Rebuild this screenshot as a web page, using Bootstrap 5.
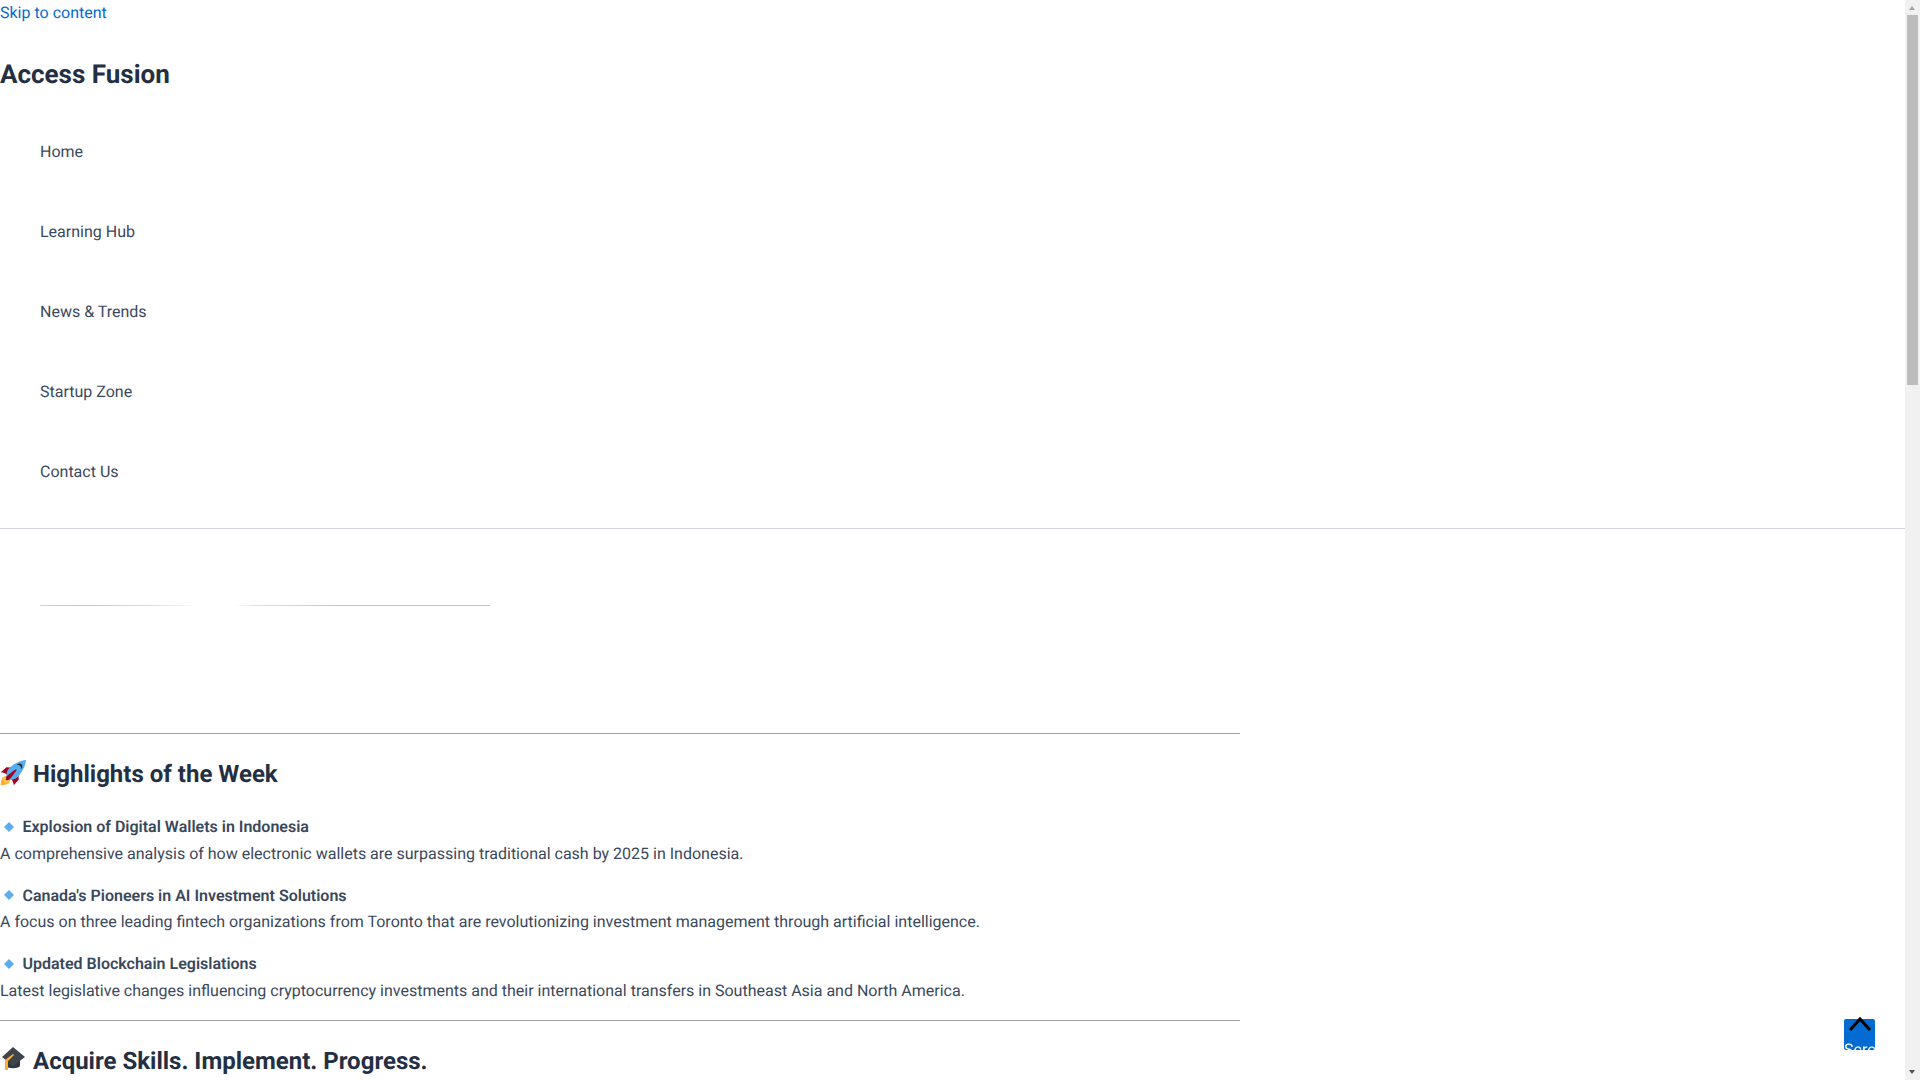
<!DOCTYPE html>
<html lang="en">
<head>
  <meta charset="UTF-8">
  <title>Access Fusion</title>
  <meta name="viewport" content="width=device-width, initial-scale=1">
  <link href="https://cdn.jsdelivr.net/npm/bootstrap@5.3.0/dist/css/bootstrap.min.css" rel="stylesheet">
  <style>
    html { overflow: hidden; }
    body { font-family: Roboto, "Liberation Sans", sans-serif; font-size: 16px; line-height: 1.65; color: #3a485c; background: #fff; margin-right: 15px; text-rendering: geometricPrecision; }
    a.skip-link { color: #046bd2; text-decoration: none; display: block; line-height: 26px; width: fit-content; }
    .site-head { border-bottom: 1px solid #d1d5db; }
    .site-title { font-size: 26px; font-weight: 700; line-height: 1.2; color: #232f43; margin: 0; padding: 34px 0 21px; }
    .menu-list { padding-bottom: 16px; }
    .menu-link { display: block; padding: 0 40px; line-height: 80px; color: #3a485c; text-decoration: none; }
    .hero-lines { padding: 76px 0 0 40px; height: 204px; }
    .hero-line { height: 1px; background: #c4c7cb; }
    .line-one { width: 160px; background: linear-gradient(90deg, #c6d3de 0%, #c4c5c8 30%, #d5dfe7 70%, #fff 100%); }
    .line-two { width: 255px; margin-left: 35px; background: linear-gradient(90deg, #fff 0%, #d8e3ee 8%, #c4c5c8 40%, #c4c5c8 100%); }
    .page-col { width: 1240px; }
    .rule { height: 1px; background: #a3a3a3; }
    .sect-title { font-size: 24px; font-weight: 700; line-height: 1.3; color: #232f43; margin: 0; padding-top: 25px; display: flex; align-items: center; gap: 7px; }
    .sect-title svg { transform: translateY(-2px); }
    .news-list { padding-top: 24px; }
    .news-title { font-size: 16px; font-weight: 600; line-height: 26.400px; color: #3a485c; display: flex; align-items: center; gap: 4.500px; margin: 0; }
    .news-title svg { transform: translateY(-1px); }
    .news-text { line-height: 26.400px; margin: 0; }
    .news-item { margin-bottom: 15.700px; }
    .to-top { position: fixed; left: 1844px; top: 1019px; width: 31px; height: 31px; background: #046bd2; border-radius: 2px; overflow: hidden; color: #fff; font-size: 16px; line-height: 1; white-space: nowrap; }
    .to-top span { display: block; padding-top: 23px; }
    .top-chevron { position: fixed; left: 1848px; top: 1016px; }
    .fake-scroll { position: fixed; top: 0; right: 0; bottom: 0; width: 15px; background: #f1f1f1; }
    .fake-thumb { position: absolute; left: 2px; top: 15px; width: 11px; height: 370px; background: #bcbcbc; }
    .fake-up, .fake-down { position: absolute; left: 4px; width: 0; height: 0; border-left: 3.500px solid transparent; border-right: 3.500px solid transparent; }
    .fake-up { top: 6px; border-bottom: 4px solid #a3a3a3; }
    .fake-down { bottom: 6px; border-top: 4px solid #505050; }
  </style>
</head>
<body>
  <a class="skip-link" href="#main">Skip to content</a>

  <header class="site-head">
    <h1 class="site-title">Access Fusion</h1>
    <nav>
      <ul class="list-unstyled m-0 menu-list">
        <li><a class="menu-link" href="#">Home</a></li>
        <li><a class="menu-link" href="#">Learning Hub</a></li>
        <li><a class="menu-link" href="#">News &amp; Trends</a></li>
        <li><a class="menu-link" href="#">Startup Zone</a></li>
        <li><a class="menu-link" href="#">Contact Us</a></li>
      </ul>
    </nav>
  </header>

  <main id="main" class="page-col">
    <div class="hero-lines d-flex align-items-start">
      <div class="hero-line line-one"></div>
      <div class="hero-line line-two"></div>
    </div>
    <div class="rule"></div>

    <h2 class="sect-title">
      <svg width="26" height="26" viewBox="0 0 36 36"><path fill="#A0041E" d="M1 17l8-7 16 1 1 16-7 8s0-6-6-12-12-6-12-6z"/><path fill="#FFAC33" d="M1 35s0-8 3-11 11-3 11-3 0 8-3 11-11 3-11 3z"/><circle fill="#FFCC4D" cx="9" cy="27" r="4"/><path fill="#55ACEE" d="M36 0S26 0 14 10c-6 5-6 14-4 16s11 2 16-4C36 10 36 0 36 0z"/><path fill="#292F33" d="M27 5c-1.600 0-3 1-3.600 2.400.5-.2 1-.4 1.600-.4 2.200 0 4 1.800 4 4 0 .6-.1 1.100-.4 1.600 1.400-.6 2.400-2 2.400-3.600 0-2.200-1.800-4-4-4z"/><path fill="#A0041E" d="M8 28s0-4 1-5 13-11 14-10-9 13-10 14-5 1-5 1z"/></svg>
      Highlights of the Week
    </h2>

    <div class="news-list">
      <div class="news-item">
        <h3 class="news-title"><svg width="18" height="18" viewBox="0 0 18 18"><path fill="#5dadec" d="M9 4l5 5-5 5-5-5z"/></svg>Explosion of Digital Wallets in Indonesia</h3>
        <p class="news-text">A comprehensive analysis of how electronic wallets are surpassing traditional cash by 2025 in Indonesia.</p>
      </div>
      <div class="news-item">
        <h3 class="news-title"><svg width="18" height="18" viewBox="0 0 18 18"><path fill="#5dadec" d="M9 4l5 5-5 5-5-5z"/></svg>Canada's Pioneers in AI Investment Solutions</h3>
        <p class="news-text">A focus on three leading fintech organizations from Toronto that are revolutionizing investment management through artificial intelligence.</p>
      </div>
      <div class="news-item">
        <h3 class="news-title"><svg width="18" height="18" viewBox="0 0 18 18"><path fill="#5dadec" d="M9 4l5 5-5 5-5-5z"/></svg>Updated Blockchain Legislations</h3>
        <p class="news-text">Latest legislative changes influencing cryptocurrency investments and their international transfers in Southeast Asia and North America.</p>
      </div>
    </div>
    <div class="rule"></div>

    <h2 class="sect-title">
      <svg width="26" height="26" viewBox="0 0 26 26"><path fill="#31373d" d="M6 12v8c2 3 12 3 14 0v-8z"/><path fill="#3d444b" d="M13 1l12 10-12 9L2 11z"/><path fill="#ffac33" d="M5 14l8-6 1 1-6 6v9H5z"/></svg>
      Acquire Skills. Implement. Progress.
    </h2>
  </main>

  <a class="to-top text-decoration-none" href="#"><span>Scroll to top</span></a>
  <svg class="top-chevron" width="24" height="16" viewBox="0 0 24 16"><path d="M2 14L12 3l10 11" fill="none" stroke="#000" stroke-width="3"/></svg>

  <div class="fake-scroll">
    <div class="fake-up"></div>
    <div class="fake-thumb"></div>
    <div class="fake-down"></div>
  </div>

  <script src="https://cdn.jsdelivr.net/npm/bootstrap@5.3.0/dist/js/bootstrap.bundle.min.js"></script>
</body>
</html>
